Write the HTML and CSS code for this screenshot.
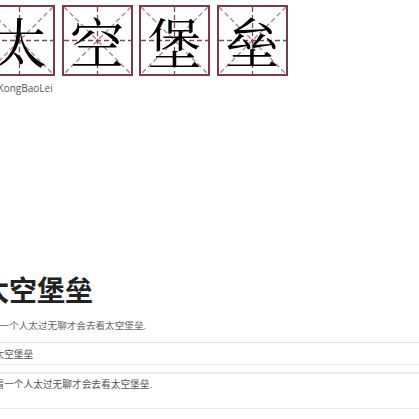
FILE: index.html
```html
<!DOCTYPE html>
<html lang="zh">
<head>
<meta charset="utf-8">
<title>太空堡垒</title>
<link rel="stylesheet" href="styles.css">
</head>
<body>
<div class="page">
  <div class="grid">
    <div class="box">
      <svg class="guide" viewBox="0 0 67 67" preserveAspectRatio="none"><line class="diag" x1="0" y1="0" x2="67" y2="67"/><line class="diag" x1="67" y1="0" x2="0" y2="67"/><line class="mid" x1="0" y1="33.5" x2="67" y2="33.5"/><line class="mid" x1="33.5" y1="0" x2="33.5" y2="67"/></svg>
      <span class="ch">太</span>
    </div>
    <div class="box">
      <svg class="guide" viewBox="0 0 67 67" preserveAspectRatio="none"><line class="diag" x1="0" y1="0" x2="67" y2="67"/><line class="diag" x1="67" y1="0" x2="0" y2="67"/><line class="mid" x1="0" y1="33.5" x2="67" y2="33.5"/><line class="mid" x1="33.5" y1="0" x2="33.5" y2="67"/></svg>
      <span class="ch">空</span>
    </div>
    <div class="box">
      <svg class="guide" viewBox="0 0 67 67" preserveAspectRatio="none"><line class="diag" x1="0" y1="0" x2="67" y2="67"/><line class="diag" x1="67" y1="0" x2="0" y2="67"/><line class="mid" x1="0" y1="33.5" x2="67" y2="33.5"/><line class="mid" x1="33.5" y1="0" x2="33.5" y2="67"/></svg>
      <span class="ch">堡</span>
    </div>
    <div class="box">
      <svg class="guide" viewBox="0 0 67 67" preserveAspectRatio="none"><line class="diag" x1="0" y1="0" x2="67" y2="67"/><line class="diag" x1="67" y1="0" x2="0" y2="67"/><line class="mid" x1="0" y1="33.5" x2="67" y2="33.5"/><line class="mid" x1="33.5" y1="0" x2="33.5" y2="67"/></svg>
      <span class="ch">垒</span>
    </div>
  </div>
  <div class="pinyin">TaiKongBaoLei</div>
  <h1 class="title">太空堡垒</h1>
  <p class="desc">看一个人太过无聊才会去看太空堡垒.</p>
  <div class="row row-first">太空堡垒</div>
  <div class="row row-second">看一个人太过无聊才会去看太空堡垒.</div>
</div>
</body>
</html>
```
FILE: styles.css
```css
html, body {
  margin: 0;
  padding: 0;
  background: #fff;
  overflow: hidden;
}
body {
  font-family: "Noto Sans CJK SC", "Noto Sans", sans-serif;
  color: #666;
}
.page {
  margin-left: -19px;
  width: 460px;
}
.grid {
  display: flex;
  gap: 6.5px;
  margin-left: 3px;
  padding-top: 5px;
}
.box {
  position: relative;
  width: 71px;
  height: 71px;
  box-sizing: border-box;
  border: 2px solid #7a3b4c;
  display: flex;
  align-items: center;
  justify-content: center;
}
.guide {
  position: absolute;
  left: 0;
  top: 0;
  width: 100%;
  height: 100%;
}
.guide line {
  stroke-width: 1.3;
  stroke-dasharray: 5 3;
}
.guide .mid {
  stroke: #8a4457;
}
.guide .diag {
  stroke: #b47a88;
}
.ch {
  position: relative;
  font-family: "Noto Serif CJK SC", "Noto Sans CJK SC", serif;
  font-size: 54px;
  line-height: 1;
  color: #000;
}
.pinyin {
  font-family: "Open Sans", "Noto Sans", sans-serif;
  font-size: 10px;
  line-height: 14px;
  color: #555;
  margin: 5px 0 0 3px;
}
.title {
  margin: 177px 0 0 0;
  font-size: 28px;
  line-height: 34px;
  font-weight: 700;
  color: #222;
}
.desc {
  margin: 12px 0 0 0;
  padding-left: 9px;
  font-size: 9.6px;
  line-height: 14px;
  color: #666;
}
.row {
  font-size: 9.7px;
  line-height: 14px;
  color: #555;
  padding-left: 13.5px;
  border-bottom: 1px solid #e6e6e6;
}
.row-first {
  margin-top: 10px;
  border-top: 1px solid #e6e6e6;
  height: 21px;
  box-sizing: content-box;
  display: flex;
  align-items: center;
}
.row-second {
  margin-top: 7px;
  border-top: 2px solid #e9e9e9;
  padding-top: 3px;
  height: 31px;
}
```
